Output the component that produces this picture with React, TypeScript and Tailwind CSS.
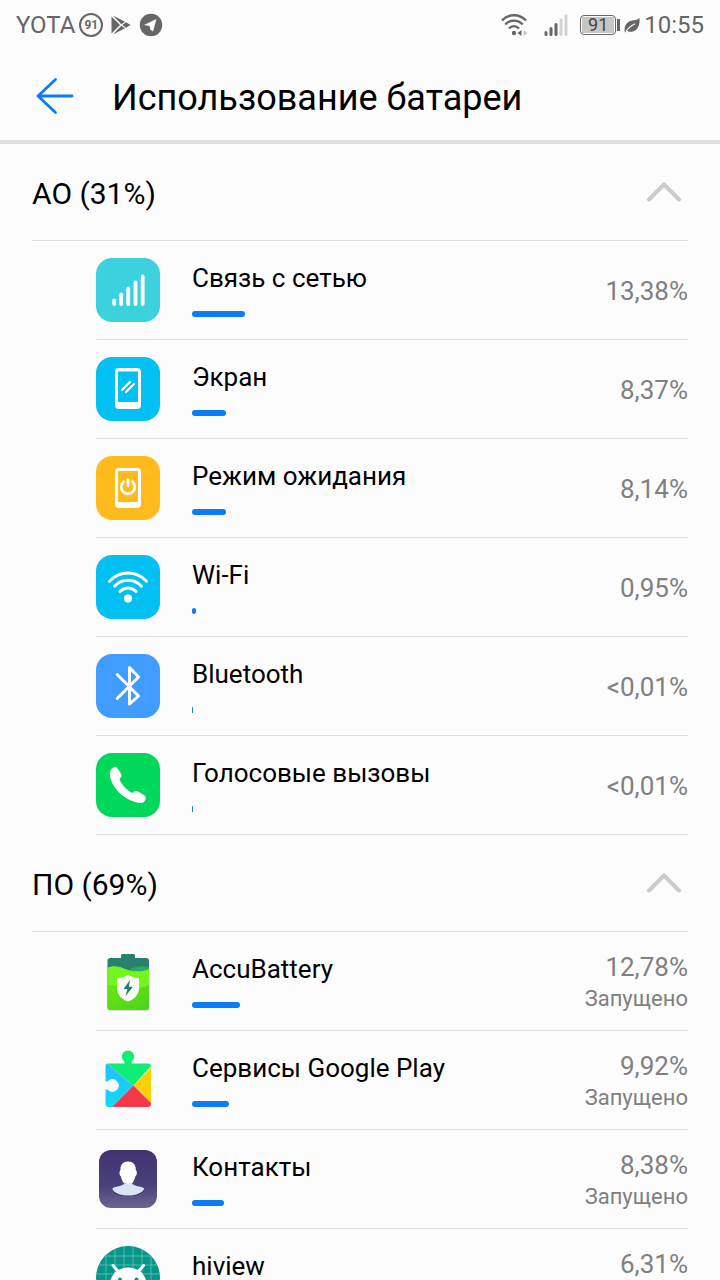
import { useState, type ReactNode } from "react";

type Usage = {
  name: string;
  label: string;
  percent: number;
  status?: string;
  icon: ReactNode;
};

function Tile({ className, children }: { className: string; children: ReactNode }) {
  return (
    <svg viewBox="0 0 64 64" className={`size-16 rounded-2xl ${className}`} fill="none" aria-hidden="true">
      {children}
    </svg>
  );
}

function SignalIcon() {
  return (
    <Tile className="bg-[#3bd1dd]">
      <path
        d="M18.2 46v-3.5M25.2 46V36.5M32.2 46V30.5M39.5 46V24.5M46.7 46V18.5"
        stroke="#fff"
        strokeWidth="3.8"
        strokeLinecap="round"
      />
    </Tile>
  );
}

function ScreenIcon() {
  return (
    <Tile className="bg-[#03c0f3]">
      <rect x="19" y="11" width="26" height="41" rx="4" fill="#fff" />
      <rect x="22" y="14.5" width="20" height="30.5" fill="#03c0f3" />
      <path d="M26 33l8-8M30 35l8-8" stroke="#fff" strokeWidth="2.2" strokeLinecap="round" />
    </Tile>
  );
}

function StandbyIcon() {
  return (
    <Tile className="bg-[#ffbb1c]">
      <rect x="19" y="12" width="26" height="40" rx="4" fill="#fff" />
      <rect x="22" y="15" width="20" height="31" fill="#ffbb1c" />
      <path d="M27.6 25.8a6.8 6.8 0 1 0 8.8 0" stroke="#fff" strokeWidth="2.8" strokeLinecap="round" />
      <path d="M32 24v6" stroke="#fff" strokeWidth="2.8" strokeLinecap="round" />
    </Tile>
  );
}

function WifiIcon() {
  return (
    <Tile className="bg-[#03c0f3]">
      <path
        d="M13.5 26.2C23.8 15.4 40.2 15.4 50.5 26.2M18.5 31.2C26 23.2 38 23.2 45.5 31.2M24 36.4C28.5 31.9 35.5 31.9 40 36.4"
        stroke="#fff"
        strokeWidth="3"
        strokeLinecap="round"
      />
      <circle cx="32" cy="43.5" r="4" fill="#fff" />
    </Tile>
  );
}

function BluetoothIcon() {
  return (
    <Tile className="bg-[#409cff]">
      <path
        d="M21.2 20.5L42.5 42L33.500 50V13.5L42.5 23L21.2 44.5"
        stroke="#fff"
        strokeWidth="3"
        strokeLinecap="round"
        strokeLinejoin="round"
      />
    </Tile>
  );
}

function PhoneIcon() {
  return (
    <Tile className="bg-[#00d85b]">
      <path
        d="M17.3 14.5C18.7 13.6 19.9 13.5 20.8 14.4C22.5 16.5 24.3 19 25.6 21.9C26 23.1 25 24.3 23.4 26.3C25.5 31.5 30.5 37 36.3 40C37.8 38.6 39.4 37.5 41.5 38.2C44 39.6 47 41.2 49 43C50.5 44.6 49.6 46.5 48.5 48.2C47.3 49.8 45.5 50.2 43 49.9C28.5 47.5 14.5 34.5 13.7 20.5C13.7 17.5 15.5 15.7 17.3 14.5Z"
        fill="#fff"
      />
    </Tile>
  );
}

function AccuBatteryIcon() {
  return (
    <svg viewBox="0 0 64 64" className="size-16" fill="none" aria-hidden="true">
      <defs>
        <linearGradient id="accu-front" x1="0" y1="0" x2="1" y2="1">
          <stop offset="0" stopColor="#66e80e" />
          <stop offset="1" stopColor="#4fd022" />
        </linearGradient>
      </defs>
      <rect x="11.5" y="10" width="41.5" height="52" rx="3" fill="#d7e4d2" />
      <path
        d="M25 9V6.5Q25 5 26.5 5H37.5Q39 5 39 6.5V9H50Q53 9 53 12V58Q53 61 50 61H14.5Q11.5 61 11.5 58V12Q11.5 9 14.5 9Z"
        fill="#27816e"
      />
      <path d="M34 20C40 17 46 16.5 53 18V26H34Z" fill="#2ca862" />
      <path
        d="M11.5 18.5C22 15 27 20 34 21.5C41 23 47 22.5 53 20V58Q53 61 50 61H14.5Q11.5 61 11.5 58Z"
        fill="#73f51d"
      />
      <path
        d="M11.5 36.5C20 35 26 38 33 40C40 41 47 38.5 53 36V58Q53 61 50 61H14.5Q11.5 61 11.5 58Z"
        fill="url(#accu-front)"
      />
      <path
        d="M32 25.5C35 28 39 29 43 29.3V39C43 46 38 50.5 32 52.5C26 50.5 21 46 21 39V29.3C25 29 29 28 32 25.5Z"
        fill="#f7fcf5"
      />
      <path d="M34 31L27.5 40H31.5L29.5 47L37 37.8H32.8Z" fill="#1e7d70" />
    </svg>
  );
}

function PlayServicesIcon() {
  return (
    <svg viewBox="0 0 64 64" className="size-16" aria-hidden="true">
      <defs>
        <clipPath id="puzzle">
          <path d="M12 15.5H27.5Q29 15.5 28.2 13.5A6.2 6.2 0 1 1 35.8 13.5Q35 15.5 36.5 15.5H52Q55 15.5 55 18.5V56Q55 59 52 59H12.5Q9.5 59 9.5 56V41.5H10.5Q12 41.5 13 42.7A6.2 6.2 0 1 0 13 32.3Q12 33.5 10.5 33.5H9.5V18Q9.5 15.5 12 15.5Z" />
        </clipPath>
        <linearGradient id="play-blue" x1="0" y1="0" x2="0" y2="1">
          <stop offset="0" stopColor="#29bdfc" />
          <stop offset="1" stopColor="#0cdcf5" />
        </linearGradient>
      </defs>
      <g clipPath="url(#puzzle)">
        <path d="M0 0H64V8L37.5 37.5L9 14Z" fill="#0cee76" />
        <path d="M9 14L37.5 37.5L14 61H0V14Z" fill="url(#play-blue)" />
        <path d="M37.5 37.5L58 16.5V58Z" fill="#fdd008" />
        <path d="M37.5 37.5L58 58V62H13Z" fill="#f43749" />
      </g>
    </svg>
  );
}

function ContactsIcon() {
  return (
    <svg viewBox="0 0 64 64" className="size-16" aria-hidden="true">
      <defs>
        <linearGradient id="contacts-bg" x1="0" y1="0" x2="0" y2="1">
          <stop offset="0" stopColor="#3f3371" />
          <stop offset="0.6" stopColor="#4a4079" />
          <stop offset="1" stopColor="#6d6493" />
        </linearGradient>
      </defs>
      <rect x="3" y="3" width="58" height="58" rx="12" fill="url(#contacts-bg)" />
      <path d="M16.5 43C21 47 42 47 48 43C46 51 18 51 16.5 43Z" fill="#2f275c" />
      <path
        d="M29 36.5C26 39 20 39.5 16.5 41.2C16.3 45 23 48.5 32.3 48.5C41 48.5 48.2 45 48 41.2C44.5 39.5 38.5 39 35.5 36.5Z"
        fill="#dbe3f5"
      />
      <path
        d="M32 14.5C37 14.5 40 17.5 39.8 23C41.5 24 41 28.5 39.3 29.5C38.5 33 37.5 34.5 36.5 36C35.5 37.2 29 37.2 27.8 36C26.5 34.5 25.5 33 25 29.5C23.3 28.5 23 24 24.5 23C24.3 17.5 27 14.5 32 14.5Z"
        fill="#fff"
      />
    </svg>
  );
}

function AndroidIcon() {
  return (
    <Tile className="rounded-full bg-[#049688]">
      <path
        d="M10 0V64M19 0V64M28 0V64M37 0V64M46 0V64M55 0V64M0 10H64M0 19H64M0 28H64M0 37H64M0 46H64"
        stroke="#6fc2b9"
        strokeWidth="0.8"
      />
      <path d="M17 19.5L23.5 27M47.5 19.5L41 27" stroke="#fff" strokeWidth="3" strokeLinecap="round" />
      <path d="M13.5 41C13.5 29 21.5 21.5 32.2 21.5C43 21.5 51 29 51 41Z" fill="#fff" />
      <circle cx="24" cy="33.5" r="2" fill="#049688" />
      <circle cx="40.5" cy="33.5" r="2" fill="#049688" />
    </Tile>
  );
}

const hardware: Usage[] = [
  { name: "Связь с сетью", label: "13,38%", percent: 13.38, icon: <SignalIcon /> },
  { name: "Экран", label: "8,37%", percent: 8.37, icon: <ScreenIcon /> },
  { name: "Режим ожидания", label: "8,14%", percent: 8.14, icon: <StandbyIcon /> },
  { name: "Wi-Fi", label: "0,95%", percent: 0.95, icon: <WifiIcon /> },
  { name: "Bluetooth", label: "<0,01%", percent: 0, icon: <BluetoothIcon /> },
  { name: "Голосовые вызовы", label: "<0,01%", percent: 0, icon: <PhoneIcon /> },
];

const software: Usage[] = [
  { name: "AccuBattery", label: "12,78%", percent: 12.78, status: "Запущено", icon: <AccuBatteryIcon /> },
  { name: "Сервисы Google Play", label: "9,92%", percent: 9.92, status: "Запущено", icon: <PlayServicesIcon /> },
  { name: "Контакты", label: "8,38%", percent: 8.38, status: "Запущено", icon: <ContactsIcon /> },
  { name: "hiview", label: "6,31%", percent: 6.31, status: "Запущено", icon: <AndroidIcon /> },
];

function StatusBar() {
  return (
    <div className="flex h-12 items-center justify-between px-4 pt-0.5 text-2xl text-[#666]">
      <div className="flex items-center">
        <span>YOTA</span>
        <span className="ml-1 flex size-6 items-center justify-center rounded-full border-2 border-[#666] text-xs leading-none font-bold">
          91
        </span>
        <svg viewBox="0 0 20 20" className="ml-2 size-5" fill="#666" aria-hidden="true">
          <path d="M0.5 1.5L9 10L0.500 18.5Z" />
          <path d="M2 0.5L14 6.8L10.300 9.2Z" />
          <path d="M2 19.5L14 13.2L10.3 10.8Z" />
          <path d="M15 7.2L19.5 10L15 12.8L11.3 10Z" />
        </svg>
        <svg viewBox="0 0 24 24" className="ml-2 size-6" aria-hidden="true">
          <circle cx="12" cy="12" r="11.2" fill="#666" />
          <path d="M5 12L17.5 6L14 18.5L11.3 16.5L10.5 13Z" fill="#fcfcfc" />
        </svg>
      </div>
      <div className="flex items-center">
        <svg viewBox="0 0 28 24" className="h-6 w-7" fill="none" aria-hidden="true">
          <path
            d="M2 7.5C8.5 0.5 19.5 0.5 26 7.5M5.3 11.5C10 6.3 18 6.3 22.7 11.5M9 15.5C12 12.3 16 12.3 19 15.5"
            stroke="#666"
            strokeWidth="2.4"
          />
          <circle cx="14" cy="20" r="2.2" fill="#666" />
          <path d="M21.5 17V23L17.5 20Z" fill="#666" />
          <path d="M23.5 17V23L27.5 20Z" fill="#c4c4c4" />
        </svg>
        <svg viewBox="0 0 24 24" className="ml-4 size-6" fill="none" strokeWidth="3" strokeLinecap="round" aria-hidden="true">
          <path d="M2 21.5V19.5M7 21.5V15.5M12 21.5V11.5" stroke="#666" />
          <path d="M17 21.5V7M22 21.5V3" stroke="#d2d2d2" />
        </svg>
        <span className="ml-3 flex h-5 w-9 rounded-sm border border-[#666] p-px">
          <span className="flex flex-1 items-center justify-center bg-[#c6c6c6] text-lg leading-none text-[#444]">91</span>
        </span>
        <span className="ml-px h-3 w-[3px] bg-[#666]" />
        <svg viewBox="0 0 18 18" className="ml-1 size-4" aria-hidden="true">
          <path
            d="M17.5 1C18 8 16 15.5 8.5 16.5C6 17 4.5 16 3.5 15.5L1.5 17.5L0.8 16.5C0 10 3 5 9.5 4C13 3.5 15.5 2.5 17.5 1Z"
            fill="#666"
          />
          <path d="M2 16.5C5 12 8 9.5 12.5 7.5" stroke="#fcfcfc" strokeWidth="1.2" fill="none" />
        </svg>
        <span className="ml-1">10:55</span>
      </div>
    </div>
  );
}

function UsageRow({ item }: { item: Usage }) {
  return (
    <li className="ml-16 flex min-h-[99px] items-center border-b border-[#dfdfdf]">
      <div className="mr-8 shrink-0">{item.icon}</div>
      <div className="mr-4 min-w-0 flex-1">
        <p className="mb-[18px] text-[26px] leading-[30px]">{item.name}</p>
        <div className="h-1.5 min-w-px rounded-full bg-[#0a7cf5]" style={{ width: `${item.percent}%` }} />
      </div>
      <div className={item.status ? "pt-1 text-right text-[#808080]" : "pt-0.5 text-right text-[#808080]"}>
        <p className="text-[26px] leading-8">{item.label}</p>
        {item.status && <p className="text-[22px] leading-8">{item.status}</p>}
      </div>
    </li>
  );
}

function UsageSection({ title, items }: { title: string; items: Usage[] }) {
  const [open, setOpen] = useState(true);

  return (
    <section className="px-8">
      <h2>
        <button
          type="button"
          aria-expanded={open}
          onClick={() => setOpen(!open)}
          className="flex w-full items-center justify-between border-b border-[#dfdfdf] py-7 text-left"
        >
          <span className="pt-1 text-[30px] leading-9">{title}</span>
          <svg
            viewBox="0 0 36 20"
            className={open ? "mr-1.5 h-5 w-9" : "mr-1.5 h-5 w-9 rotate-180"}
            fill="none"
            stroke="#cbcbcb"
            strokeWidth="4"
            strokeLinecap="round"
            aria-hidden="true"
          >
            <path d="M3 17.5L18 2.5L33 17.5" />
          </svg>
        </button>
      </h2>
      {open && (
        <ul>
          {items.map((item) => (
            <UsageRow key={item.name} item={item} />
          ))}
        </ul>
      )}
    </section>
  );
}

export default function App() {
  return (
    <div className="min-h-screen bg-[#fcfcfc] font-['Roboto',sans-serif] text-black">
      <StatusBar />
      <header className="flex items-center border-b-4 border-[#e0e0e0] px-8 pt-6 pb-5">
        <button type="button" aria-label="Назад" className="mr-8">
          <svg
            viewBox="0 0 48 48"
            className="size-12"
            fill="none"
            stroke="#0a7cf5"
            strokeWidth="2.8"
            strokeLinecap="round"
            strokeLinejoin="round"
            aria-hidden="true"
          >
            <path d="M40 24H6M23.5 7.5L6 24L23.5 40.5" />
          </svg>
        </button>
        <h1 className="pt-1 text-4xl leading-11">Использование батареи</h1>
      </header>
      <main>
        <UsageSection title="АО (31%)" items={hardware} />
        <UsageSection title="ПО (69%)" items={software} />
      </main>
    </div>
  );
}
